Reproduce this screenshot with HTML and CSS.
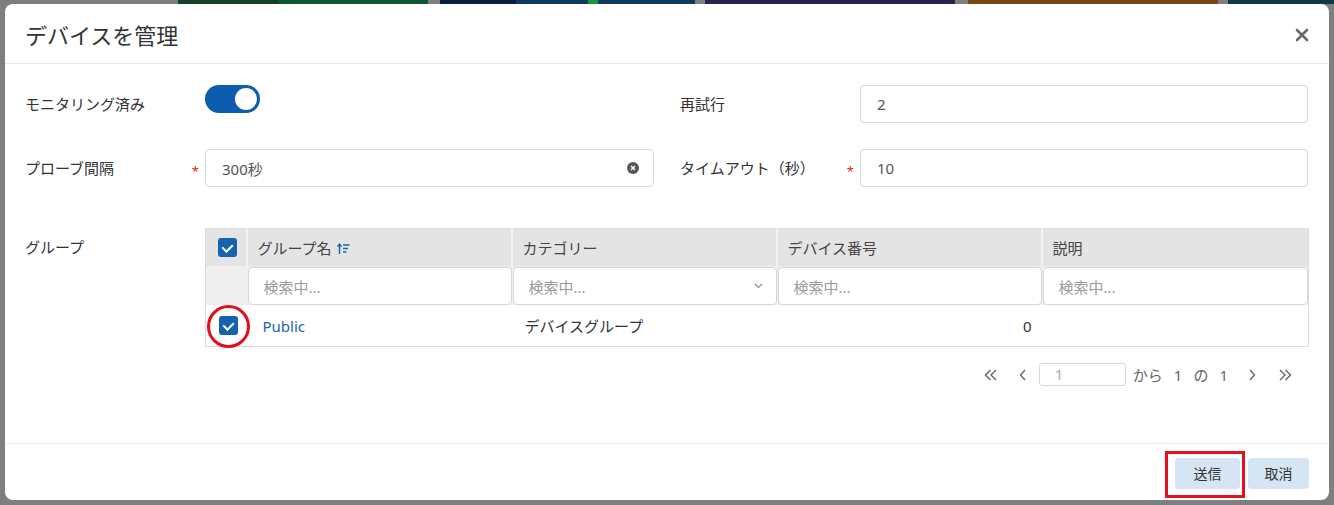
FILE: index.html
```html
<!DOCTYPE html>
<html lang="ja">

<head>
    <meta charset="UTF-8">
    <title>デバイスを管理</title>
    <link rel="stylesheet" href="styles.css">
</head>

<body>
    <div class="backdrop">
        <div class="tile t-grey"></div>
        <div class="tile t-green"></div>
        <div class="tile t-blue"></div>
        <div class="tile t-purple"></div>
        <div class="tile t-orange"></div>
        <div class="tile t-teal"></div>
    </div>

    <div class="dialog">
        <div class="dialog-header">
            <h2 class="title">デバイスを管理</h2>
            <span class="close">
                <svg width="14" height="14" viewBox="0 0 14 14">
                    <path d="M2 2 L12 12 M12 2 L2 12" stroke="#6b6b6b" stroke-width="2.6" stroke-linecap="round" />
                </svg>
            </span>
        </div>

        <div class="dialog-body">
            <div class="form-grid">
                <div class="field">
                    <div class="label">モニタリング済み</div>
                    <div class="control">
                        <span class="toggle"><span class="knob"></span></span>
                    </div>
                </div>
                <div class="field">
                    <div class="label">再試行</div>
                    <div class="control">
                        <div class="input">2</div>
                    </div>
                </div>
                <div class="field">
                    <div class="label">プローブ間隔<span class="req">*</span></div>
                    <div class="control">
                        <div class="input">
                            <span>300秒</span>
                            <svg class="clear-icon" width="12" height="12" viewBox="0 0 12 12">
                                <circle cx="6" cy="6" r="6" fill="#555" />
                                <path d="M4 4 L8 8 M8 4 L4 8" stroke="#fff" stroke-width="1.5" />
                            </svg>
                        </div>
                    </div>
                </div>
                <div class="field">
                    <div class="label">タイムアウト（秒）<span class="req">*</span></div>
                    <div class="control">
                        <div class="input">10</div>
                    </div>
                </div>
            </div>

            <div class="group-row">
                <div class="label group-label">グループ</div>
                <div class="group-box">
                    <table class="grid">
                        <colgroup>
                            <col class="c-sel">
                            <col class="c-col">
                            <col class="c-col">
                            <col class="c-col">
                            <col>
                        </colgroup>
                        <thead>
                            <tr class="head">
                                <th class="sel"><span class="check"></span></th>
                                <th>グループ名
                                    <svg class="sort-icon" width="13" height="12" viewBox="0 0 13 12">
                                        <path d="M2.5 11 V1.5 M0.5 3.5 L2.5 1.2 L4.5 3.5" stroke="#1d63b3" stroke-width="1.5" fill="none" />
                                        <path d="M6 2 H12.5 M6 5.5 H11 M6 9 H9.5" stroke="#1d63b3" stroke-width="1.6" />
                                    </svg>
                                </th>
                                <th>カテゴリー</th>
                                <th>デバイス番号</th>
                                <th>説明</th>
                            </tr>
                            <tr class="filters">
                                <th class="sel"></th>
                                <th><div class="filter">検索中...</div></th>
                                <th>
                                    <div class="filter">検索中...
                                        <svg class="chev" width="9" height="6" viewBox="0 0 9 6">
                                            <path d="M1 1 L4.5 4.5 L8 1" stroke="#888" stroke-width="1.1" fill="none" />
                                        </svg>
                                    </div>
                                </th>
                                <th><div class="filter">検索中...</div></th>
                                <th><div class="filter">検索中...</div></th>
                            </tr>
                        </thead>
                        <tbody>
                            <tr>
                                <td class="sel"><span class="check"></span><span class="mark-circle"></span></td>
                                <td><a class="link">Public</a></td>
                                <td>デバイスグループ</td>
                                <td class="num">0</td>
                                <td></td>
                            </tr>
                        </tbody>
                    </table>

                    <div class="pager">
                        <svg class="pg first" width="14" height="12" viewBox="0 0 14 12">
                            <path d="M6.5 1 L1.5 6 L6.5 11 M12 1 L7 6 L12 11" stroke="#666" stroke-width="1.4" fill="none" />
                        </svg>
                        <svg class="pg prev" width="8" height="12" viewBox="0 0 8 12">
                            <path d="M6 1 L1.5 6 L6 11" stroke="#666" stroke-width="1.4" fill="none" />
                        </svg>
                        <div class="page-input">1</div>
                        <span class="page-text">から<span class="sp">1</span>の<span class="sp">1</span></span>
                        <svg class="pg next" width="8" height="12" viewBox="0 0 8 12">
                            <path d="M2 1 L6.5 6 L2 11" stroke="#666" stroke-width="1.4" fill="none" />
                        </svg>
                        <svg class="pg last" width="14" height="12" viewBox="0 0 14 12">
                            <path d="M2 1 L7 6 L2 11 M7.5 1 L12.5 6 L7.5 11" stroke="#666" stroke-width="1.4" fill="none" />
                        </svg>
                    </div>
                </div>
            </div>
        </div>

        <div class="dialog-footer">
            <button class="btn send">送信<span class="mark-box"></span></button>
            <button class="btn cancel">取消</button>
        </div>
    </div>
</body>

</html>
```

FILE: styles.css
```css
body {
    margin: 0;
    padding: 0;
    background-color: #7f7f7f;
    font-family: "Noto Sans", "Noto Sans CJK JP", sans-serif;
    font-size: 15px;
    color: #333;
    height: 505px;
    overflow: hidden;
}

/* page behind the modal, only the top edge shows */
.backdrop {
    display: flex;
    height: 4px;
}

.tile {
    height: 4px;
}

.t-grey {
    width: 178px;
    background-color: #7d7d7d;
}

.t-green {
    width: 250px;
    margin-right: 12px;
    background: linear-gradient(90deg, #163f2a 40%, #0d5633 40%);
}

.t-blue {
    width: 255px;
    margin-right: 10px;
    background: linear-gradient(90deg, #0b1f3d 30%, #0e3a5e 30%, #0e3a5e 58%, #1c9440 58%, #1c9440 62%, #0e3a5e 62%);
}

.t-purple {
    width: 250px;
    margin-right: 13px;
    background-color: #29224c;
}

.t-orange {
    width: 250px;
    margin-right: 10px;
    background-color: #774812;
}

.t-teal {
    flex: 1;
    background-color: #0d3947;
}

.dialog {
    margin-left: 5px;
    width: 1324px;
    height: 496px;
    background-color: #fff;
    border-radius: 8px;
    display: flex;
    flex-direction: column;
    box-sizing: border-box;
}

.dialog-header {
    height: 59px;
    display: flex;
    align-items: center;
    justify-content: space-between;
    padding: 0 20px;
    border-bottom: 1px solid #e8e8e8;
}

.title {
    margin: 0;
    font-size: 22px;
    font-weight: normal;
    color: #333;
    line-height: 1;
    margin-top: 2px;
}

.close {
    display: flex;
    margin-top: 2px;
}

.dialog-body {
    flex: 1;
    padding: 21px 21px 0 20px;
}

.form-grid {
    display: grid;
    grid-template-columns: 629px 628px;
    column-gap: 26px;
    row-gap: 26px;
}

.field {
    display: flex;
    align-items: center;
    height: 38px;
}

.label {
    width: 180px;
    flex-shrink: 0;
    position: relative;
    color: #333;
    line-height: 20px;
}

.req {
    position: absolute;
    right: 6px;
    top: 3px;
    color: #d9261c;
    font-size: 13px;
}

.control {
    flex: 1;
}

.toggle {
    display: block;
    width: 55px;
    height: 28px;
    top: -5px;
    border-radius: 14px;
    background-color: #0c5db0;
    position: relative;
}

.knob {
    position: absolute;
    right: 3px;
    top: 3px;
    width: 22px;
    height: 22px;
    border-radius: 50%;
    background-color: #fff;
}

.input {
    height: 38px;
    box-sizing: border-box;
    border: 1px solid #d9d9d9;
    border-radius: 4px;
    padding: 0 14px 0 16px;
    display: flex;
    align-items: center;
    justify-content: space-between;
    color: #555;
}

.group-row {
    display: flex;
    margin-top: 41px;
}

.group-label {
    margin-top: 9px;
}

.group-box {
    flex: 1;
    margin-right: -1px;
}

.grid {
    width: 100%;
    border-collapse: collapse;
    table-layout: fixed;
    border: 1px solid #dcdcdc;
}

.c-sel {
    width: 41px;
}

.c-col {
    width: 265px;
}

.grid th,
.grid td {
    text-align: left;
    font-weight: normal;
    padding: 0;
}

.head th {
    height: 37px;
    background-color: #e4e4e4;
    color: #444;
    padding-left: 10px;
    border-left: 2px solid #f2f2f2;
}

.head th.sel {
    padding-left: 12px;
    border-left: none;
}

.sort-icon {
    margin-left: 1px;
    vertical-align: -1px;
}

.check {
    display: block;
    width: 19px;
    height: 19px;
    border-radius: 3px;
    background-color: #1462b0;
    position: relative;
}

.check::after {
    content: "";
    position: absolute;
    left: 6px;
    top: 4px;
    width: 5px;
    height: 8px;
    border-right: 2px solid #fff;
    border-bottom: 2px solid #fff;
    transform: rotate(45deg);
}

.filters th {
    height: 38px;
    background-color: #efefef;
    padding: 1px 0 0 1px;
}

.filter {
    height: 38px;
    box-sizing: border-box;
    background-color: #fff;
    border: 1px solid #d6d6d6;
    border-radius: 4px;
    padding-left: 15px;
    padding-right: 13px;
    color: #9a9a9a;
    display: flex;
    align-items: center;
    justify-content: space-between;
}

.grid tbody td {
    height: 41px;
    padding-left: 13px;
    color: #333;
}

.grid tbody td.sel {
    padding-left: 13px;
    position: relative;
}

.grid tbody td.num {
    text-align: right;
    padding-right: 10px;
}

.grid tbody td:nth-child(2) {
    padding-left: 16px;
}

.link {
    color: #1d63b3;
}

/* red annotation marks drawn over the screenshot */
.mark-circle {
    position: absolute;
    left: 1px;
    top: 0;
    width: 37px;
    height: 37px;
    border: 3px solid #e0101a;
    border-radius: 50%;
}

.mark-box {
    position: absolute;
    left: -10px;
    top: -7px;
    width: 74px;
    height: 41px;
    border: 3px solid #e3121c;
}

.pager {
    display: flex;
    align-items: center;
    justify-content: flex-end;
    margin-top: 16px;
    padding-right: 17px;
    color: #666;
}

.pg.first {
    margin-right: 21px;
}

.pg.prev {
    margin-right: 12px;
}

.page-input {
    width: 87px;
    height: 23px;
    box-sizing: border-box;
    border: 1px solid #d6d6d6;
    border-radius: 3px;
    padding-left: 15px;
    color: #aaa;
    line-height: 21px;
}

.page-text {
    margin-left: 7px;
    margin-right: 9px;
}

.page-text .sp {
    margin: 0 11px;
}

.pg.last {
    margin-left: 22px;
}

.dialog-footer {
    height: 56px;
    border-top: 1px solid #ececec;
    display: flex;
    align-items: center;
    justify-content: flex-end;
    gap: 8px;
    padding-right: 20px;
}

.btn {
    position: relative;
    height: 31px;
    padding: 0;
    border: none;
    border-radius: 4px;
    background-color: #d5e5f4;
    color: #333;
    font-family: "Noto Sans", "Noto Sans CJK JP", sans-serif;
    font-size: 14px;
    white-space: nowrap;
    margin-top: 2px;
}

.btn.send {
    width: 65px;
}

.btn.cancel {
    width: 61px;
}
```
